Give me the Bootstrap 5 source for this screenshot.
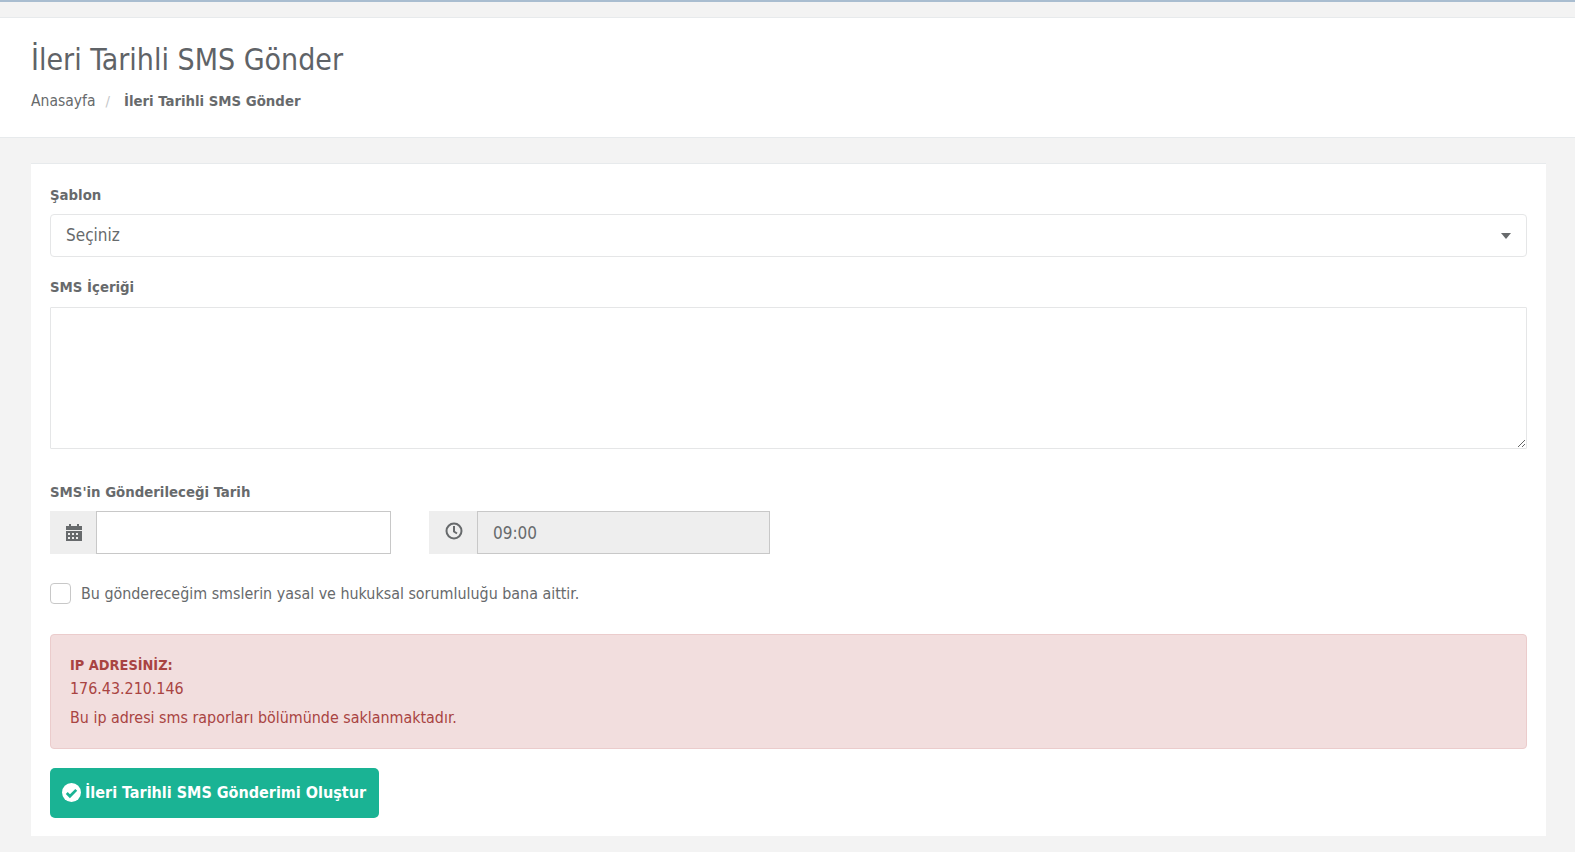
<!doctype html>
<html lang="tr"><head><meta charset="utf-8"><title>İleri Tarihli SMS Gönder</title>
<link href="https://cdn.jsdelivr.net/npm/bootstrap@5.3.0/dist/css/bootstrap.min.css" rel="stylesheet">
<style>
html,body{height:852px;overflow:hidden}
body{background:#f3f3f3;font-family:"DejaVu Sans",sans-serif;font-stretch:condensed;font-size:15.9px;color:#676a6c;border-top:2px solid #a9bdd0;padding-top:15px}
.page-head{background:#fff;border-top:1px solid #e7eaec;border-bottom:1px solid #e7eaec;height:121px;padding:24px 31px 0}
.page-head h2{font-size:30px;font-weight:400;margin:0 0 12px;line-height:36px;color:#5f6367}
.breadcrumb{margin:0;font-size:15.5px;line-height:21px}
.breadcrumb-item a{color:#676a6c;text-decoration:none}
.breadcrumb-item.active{color:#676a6c;font-weight:700;font-size:14.8px;padding-left:10px}
.breadcrumb-item+.breadcrumb-item::before{padding-right:14px;color:#c5c7c9;font-weight:400}
.panel{background:#fff;border-top:1px solid #e7eaec;margin:25px 29px 0 31px;height:673px;padding:21px 19px}
.form-label{font-weight:700;margin-bottom:9px;font-size:14.8px;line-height:20px;display:block}
.content-label{margin-bottom:10px}
.form-select,.form-control{border:1px solid #e5e6e7;color:#676a6c;font-size:17px;font-stretch:condensed}
.form-select{height:43px;border-radius:4px;padding-left:15px;margin-bottom:20px;background-image:url("data:image/svg+xml,%3Csvg xmlns='http://www.w3.org/2000/svg' viewBox='0 0 10 6'%3E%3Cpath fill='%23676a6c' d='M0 0h10L5 6z'/%3E%3C/svg%3E");background-size:10px 6px;background-position:right 15px center}
textarea.form-control{height:142px;border-radius:1px;margin-bottom:33px}
.addon{background:#eee;border:0;border-radius:0;justify-content:center;padding:0;flex:none}
.addon-a{width:47px}.addon-b{width:49px;padding-bottom:3px}
.dt-box{height:43px;border-radius:0;border-color:#c8c8c8!important;font-size:17px;padding-left:15px}
.dt-box:disabled{background:#eee}
.gr-a{width:341px}.gr-b{width:341px;margin-left:38px}
.check-row{margin:28px 0 28px}
.form-check-input{width:21px;height:21px;margin:0;border-color:#c8c8c8;border-radius:4px}
.check-row span{margin-left:2px}
.alert-box{background:#f2dede;border:1px solid #ebcccc;color:#a94442;padding:18px 19px;height:115px;margin-bottom:19px;border-radius:4px;line-height:23px}
.alert-box strong{font-size:14.4px}
.alert-box p{margin:6px 0 0}
.go-btn{background:#1ab394;color:#fff;font-weight:700;font-size:16px;font-stretch:condensed;height:50px;width:329px;border:0;border-radius:5px;padding:0 12px;display:flex;align-items:center;gap:4px;white-space:nowrap}
.go-btn svg{flex:none}
</style></head><body>
<div class="page-head">
<h2>İleri Tarihli SMS Gönder</h2>
<ol class="breadcrumb align-items-baseline"><li class="breadcrumb-item"><a href="#">Anasayfa</a></li><li class="breadcrumb-item active">İleri Tarihli SMS Gönder</li></ol>
</div>
<div class="panel">
<label class="form-label">Şablon</label>
<select class="form-select"><option>Seçiniz</option></select>
<label class="form-label content-label">SMS İçeriği</label>
<textarea class="form-control"></textarea>
<label class="form-label">SMS'in Gönderileceği Tarih</label>
<div class="d-flex">
<div class="input-group flex-nowrap gr-a"><span class="input-group-text addon addon-a"><svg width="16" height="18" viewBox="0 0 16 18" fill="#676a6c"><path d="M3 0h2v3H3zM11 0h2v3h-2z"/><path d="M0 2h16v4H0z"/><path fill-rule="evenodd" d="M0 7h16v10H0zM2 9v2h2V9zm4 0v2h2V9zm4 0v2h2V9zM2 13v2h2v-2zm4 0v2h2v-2zm4 0v2h2v-2z"/></svg></span><input class="form-control dt-box"></div>
<div class="input-group flex-nowrap gr-b"><span class="input-group-text addon addon-b"><svg width="18" height="18" viewBox="0 0 18 18" fill="none" stroke="#676a6c" stroke-width="2"><circle cx="9" cy="9" r="7.5"/><path d="M9 4v5.5l3 2"/></svg></span><input class="form-control dt-box" value="09:00" disabled></div>
</div>
<div class="d-flex align-items-center gap-2 check-row"><input class="form-check-input" type="checkbox"><span>Bu göndereceğim smslerin yasal ve hukuksal sorumluluğu bana aittir.</span></div>
<div class="alert-box"><strong>IP ADRESİNİZ:</strong><br>176.43.210.146<p>Bu ip adresi sms raporları bölümünde saklanmaktadır.</p></div>
<button class="go-btn" type="button"><svg width="19" height="19" viewBox="0 0 18 18"><circle cx="9" cy="9" r="9" fill="#fff"/><path d="M4.5 9.5l3 3 6-6" fill="none" stroke="#1ab394" stroke-width="2.6"/></svg>İleri Tarihli SMS Gönderimi Oluştur</button>
</div>
</body></html>
